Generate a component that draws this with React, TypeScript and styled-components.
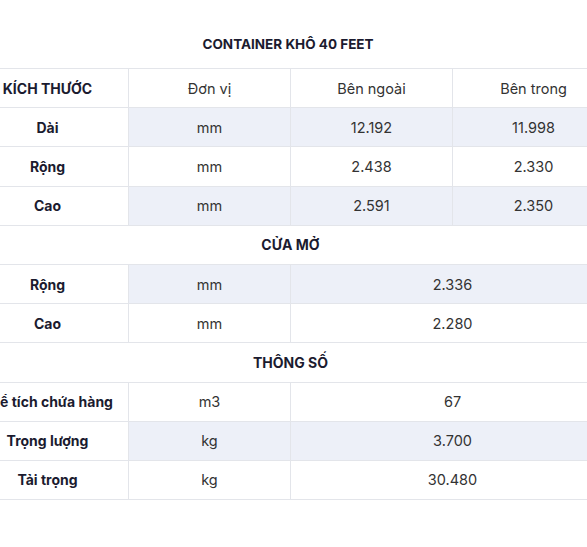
import React from "react";
import styled, { createGlobalStyle } from "styled-components";

const Global = createGlobalStyle`
  html, body { margin: 0; padding: 0; background: #fff; }
  body { font-family: Inter, "Noto Sans", sans-serif; overflow: hidden; }
`;

const Page = styled.div`
  width: 587px;
  height: 547px;
  overflow: hidden;
  padding-top: 20px;
  box-sizing: border-box;
`;

const Table = styled.table`
  width: 648px;
  margin-left: -34px;
  border-collapse: collapse;
  table-layout: fixed;
  color: #333;
  font-size: 14px;
`;

const TitleCell = styled.td`
  height: 48px;
  text-align: center;
  font-weight: 700;
  font-size: 13.5px;
  color: #1b1b2f;
  padding: 0 5px 0 0;
`;

const SectionCell = styled.td`
  height: 38.2px;
  text-align: center;
  font-weight: 700;
  font-size: 14px;
  color: #1b1b2f;
  border-top: 1px solid #e3e5ea;
  border-bottom: 1px solid #e3e5ea;
  padding: 0;
`;

const Row = styled.tr``;

const Cell = styled.td<{ $shade?: boolean; $bold?: boolean }>`
  height: 38.2px;
  padding: 0;
  text-align: center;
  border: 1px solid #e3e5ea;
  background: ${(p) => (p.$shade ? "#edf0f8" : "#fff")};
  font-weight: ${(p) => (p.$bold ? 700 : 400)};
  color: ${(p) => (p.$bold ? "#1b1b2f" : "#333")};
  white-space: nowrap;
  overflow: hidden;
  font-size: ${(p) => (p.$bold ? "14px" : "14.5px")};
`;

type R = { label: string; unit: string; vals: string[]; shade: boolean };

const dims: R[] = [
  { label: "Dài", unit: "mm", vals: ["12.192", "11.998"], shade: true },
  { label: "Rộng", unit: "mm", vals: ["2.438", "2.330"], shade: false },
  { label: "Cao", unit: "mm", vals: ["2.591", "2.350"], shade: true },
];

const door: R[] = [
  { label: "Rộng", unit: "mm", vals: ["2.336"], shade: true },
  { label: "Cao", unit: "mm", vals: ["2.280"], shade: false },
];

const specs: R[] = [
  { label: "Thể tích chứa hàng", unit: "m3", vals: ["67"], shade: false },
  { label: "Trọng lượng", unit: "kg", vals: ["3.700"], shade: true },
  { label: "Tải trọng", unit: "kg", vals: ["30.480"], shade: false },
];

const DataRow = ({ r }: { r: R }) => (
  <Row>
    <Cell $bold>{r.label}</Cell>
    <Cell $shade={r.shade}>{r.unit}</Cell>
    {r.vals.length === 2 ? (
      <>
        <Cell $shade={r.shade}>{r.vals[0]}</Cell>
        <Cell $shade={r.shade}>{r.vals[1]}</Cell>
      </>
    ) : (
      <Cell $shade={r.shade} colSpan={2}>
        {r.vals[0]}
      </Cell>
    )}
  </Row>
);

export default function App() {
  return (
    <Page>
      <Global />
      <Table>
        <colgroup>
          <col style={{ width: 162 }} />
          <col style={{ width: 162 }} />
          <col style={{ width: 162 }} />
          <col style={{ width: 162 }} />
        </colgroup>
        <tbody>
          <tr>
            <TitleCell colSpan={4}>CONTAINER KHÔ 40 FEET</TitleCell>
          </tr>
          <Row>
            <Cell $bold>KÍCH THƯỚC</Cell>
            <Cell>Đơn vị</Cell>
            <Cell>Bên ngoài</Cell>
            <Cell>Bên trong</Cell>
          </Row>
          {dims.map((r, i) => (
            <DataRow key={"d" + i} r={r} />
          ))}
          <tr>
            <SectionCell colSpan={4}>CỬA MỞ</SectionCell>
          </tr>
          {door.map((r, i) => (
            <DataRow key={"o" + i} r={r} />
          ))}
          <tr>
            <SectionCell colSpan={4}>THÔNG SỐ</SectionCell>
          </tr>
          {specs.map((r, i) => (
            <DataRow key={"s" + i} r={r} />
          ))}
        </tbody>
      </Table>
    </Page>
  );
}
